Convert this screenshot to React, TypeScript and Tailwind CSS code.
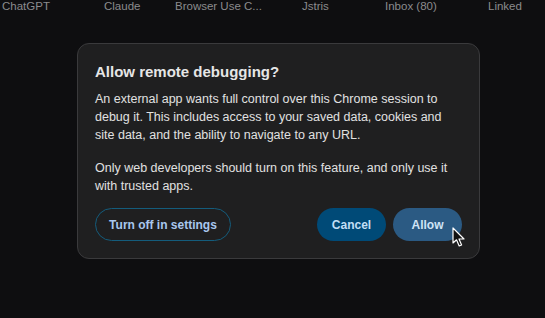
import React from "react";

export default function App() {
  const tabs = [
    { t: "ChatGPT", w: "w-[102px]" },
    { t: "Claude", w: "w-[71px]" },
    { t: "Browser Use C...", w: "w-[127px]" },
    { t: "Jstris", w: "w-[83px]" },
    { t: "Inbox (80)", w: "w-[103px]" },
    { t: "Linked", w: "w-[60px]" },
  ];
  return (
    <div
      className="w-[545px] h-[318px] bg-[#0e0e10] overflow-hidden relative"
      style={{ fontFamily: "'Liberation Sans', Arial, sans-serif" }}
    >
      <div className="flex h-[12px] pl-[2px] text-[11.5px] leading-[12px] text-[#8b8b8d] whitespace-nowrap">
        {tabs.map((x) => (
          <div key={x.t} className={`${x.w} shrink-0`}>
            {x.t}
          </div>
        ))}
      </div>
      <div className="ml-[77px] mt-[31px] w-[403px] h-[216px] rounded-[12px] bg-[#1f1f20] border border-[#3a3a3c] px-[17px] pt-[17px] flex flex-col">
        <div className="text-[15px] leading-[22px] font-bold text-[#e6e6e6]">
          Allow remote debugging?
        </div>
        <p className="mt-[7px] text-[12.5px] leading-[18px] text-[#e1e1e1]">
          An external app wants full control over this Chrome session to debug it. This
          includes access to your saved data, cookies and site data, and the ability to
          navigate to any URL.
        </p>
        <p className="mt-[15px] text-[12.5px] leading-[18px] text-[#e1e1e1]">
          Only web developers should turn on this feature, and only use it with trusted
          apps.
        </p>
        <div className="mt-[13px] flex items-center">
          <button className="w-[136px] h-[33px] rounded-full border border-[#145c7c] text-[12px] font-bold text-[#a9c7ee]">
            Turn off in settings
          </button>
          <div className="flex-1" />
          <button className="w-[69px] h-[33px] rounded-full bg-[#004a77] text-[12px] font-bold text-[#c2def5]">
            Cancel
          </button>
          <button className="ml-[7px] w-[69px] h-[33px] rounded-full bg-[#2b5a83] text-[12px] font-bold text-[#d0e4f6]">
            Allow
          </button>
        </div>
      </div>
      <svg
        className="absolute left-[452px] top-[227px]"
        width="14"
        height="21"
        viewBox="0 0 14 21"
      >
        <path
          d="M1 1 L1 16 L4.5 12.8 L7.2 19 L9.6 18 L7 12 L12 12 Z"
          fill="#111"
          stroke="#fff"
          strokeWidth="1.2"
          strokeLinejoin="round"
        />
      </svg>
    </div>
  );
}
